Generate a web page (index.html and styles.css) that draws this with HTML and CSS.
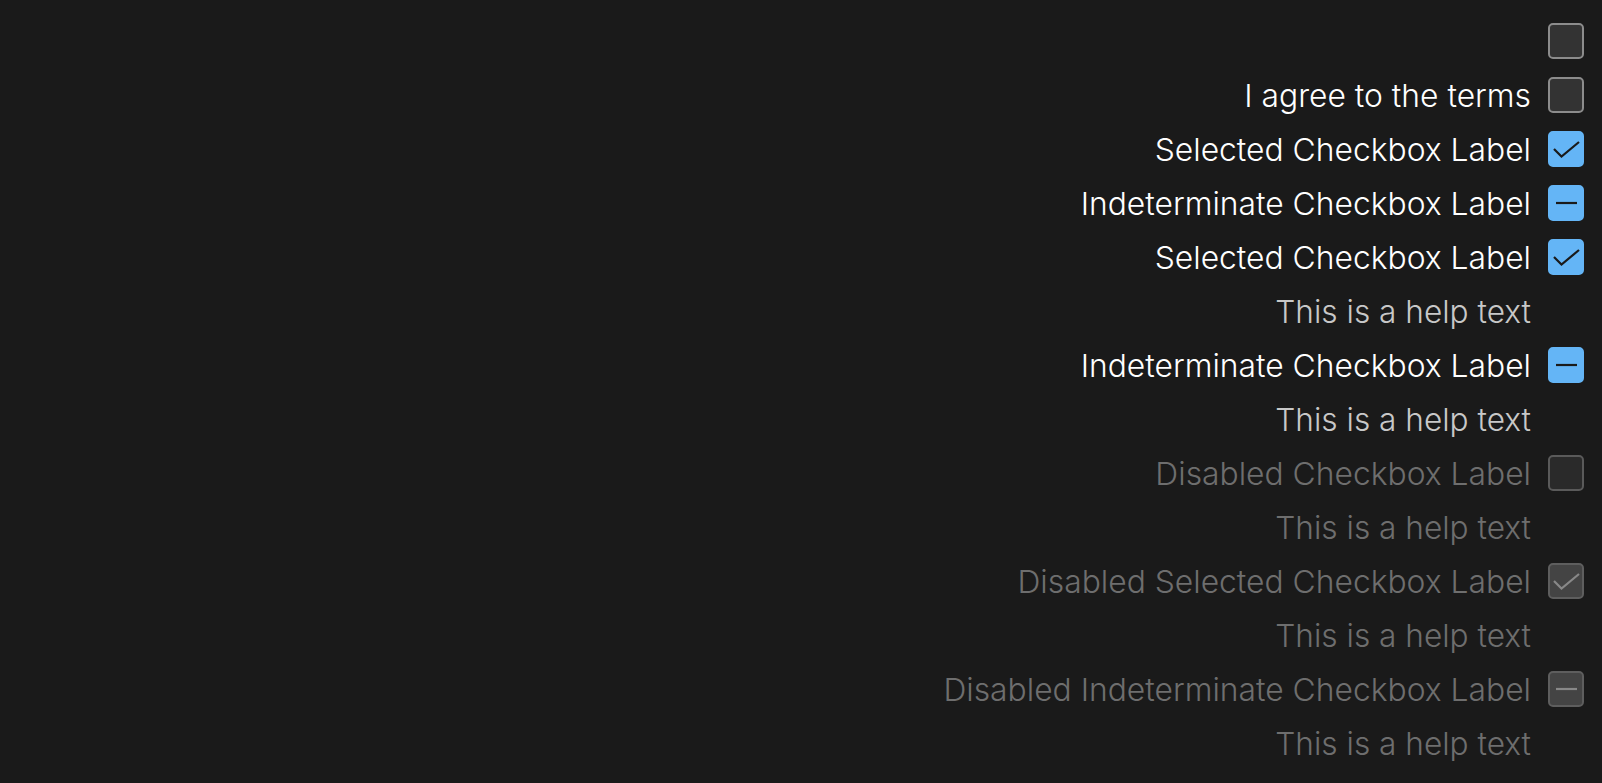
FILE: index.html
```html
<!DOCTYPE html>
<html lang="en">
<head>
<meta charset="utf-8">
<title>Checkboxes</title>
<link rel="stylesheet" href="styles.css">
</head>
<body>
<div class="list">
  <div class="row"><span class="box"></span></div>
  <div class="row"><span class="label">I agree to the terms</span><span class="box"></span></div>
  <div class="row"><span class="label">Selected Checkbox Label</span><span class="box on"><svg viewBox="0 0 36 36"><polyline points="6,18 13.5,25.5 31,11"/></svg></span></div>
  <div class="row"><span class="label">Indeterminate Checkbox Label</span><span class="box on"><svg viewBox="0 0 36 36"><line x1="8" y1="18" x2="29" y2="18"/></svg></span></div>
  <div class="row"><span class="label">Selected Checkbox Label</span><span class="box on"><svg viewBox="0 0 36 36"><polyline points="6,18 13.5,25.5 31,11"/></svg></span></div>
  <div class="row help">This is a help text</div>
  <div class="row"><span class="label">Indeterminate Checkbox Label</span><span class="box on"><svg viewBox="0 0 36 36"><line x1="8" y1="18" x2="29" y2="18"/></svg></span></div>
  <div class="row help">This is a help text</div>
  <div class="row disabled"><span class="label">Disabled Checkbox Label</span><span class="box"></span></div>
  <div class="row help disabled">This is a help text</div>
  <div class="row disabled"><span class="label">Disabled Selected Checkbox Label</span><span class="box on"><svg viewBox="0 0 36 36"><polyline points="6,18 13.5,25.5 31,11"/></svg></span></div>
  <div class="row help disabled">This is a help text</div>
  <div class="row disabled"><span class="label">Disabled Indeterminate Checkbox Label</span><span class="box on"><svg viewBox="0 0 36 36"><line x1="8" y1="18" x2="29" y2="18"/></svg></span></div>
  <div class="row help disabled">This is a help text</div>
</div>
</body>
</html>
```
FILE: styles.css
```css
html, body {
  margin: 0;
  padding: 0;
  background: #1a1a1a;
  height: 100%;
  overflow: hidden;
}
body {
  font-family: "Inter", "Noto Sans", sans-serif;
  font-weight: 350;
}
.list {
  display: flex;
  flex-direction: column;
  align-items: stretch;
  padding: 14px 18px 0 0;
}
.row {
  height: 54px;
  display: flex;
  align-items: center;
  justify-content: flex-end;
  gap: 17px;
}
.label {
  font-size: 31.8px;
  color: #ffffff;
  white-space: nowrap;
}
.help {
  font-size: 31.6px;
  color: #c8c8c8;
  padding-right: 53px;
}
.box {
  width: 36px;
  height: 36px;
  box-sizing: border-box;
  border: 2px solid #8c8c8c;
  border-radius: 5px;
  background: #333333;
  flex: none;
  display: flex;
}
.box svg {
  width: 36px;
  height: 36px;
  margin: -2px;
  fill: none;
  stroke: #1a1a1a;
  stroke-width: 2.2;
}
.box.on {
  background: #64b5f6;
  border-color: #64b5f6;
}
.disabled .label,
.help.disabled {
  color: #6e6e6e;
}
.disabled .box {
  border-color: #5a5a5a;
  background: #2a2a2a;
}
.disabled .box.on {
  background: #444444;
  border-color: #5e5e5e;
}
.disabled .box svg {
  stroke: #888888;
}
```
